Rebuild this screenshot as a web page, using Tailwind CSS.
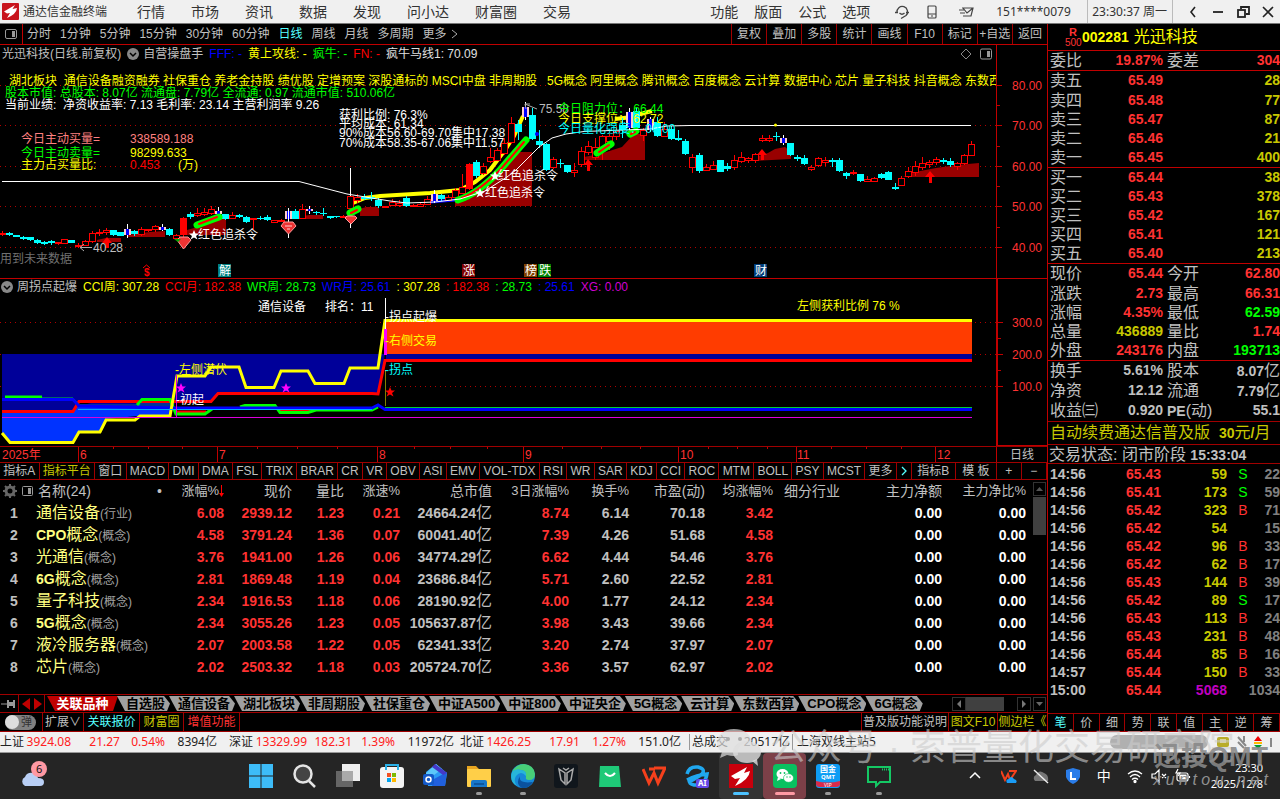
<!DOCTYPE html>
<html lang="zh-CN">
<head>
    <meta charset="UTF-8">
    <meta name="viewport" content="width=device-width, initial-scale=1.0">
    <title>通达信金融终端</title>
    <script src="https://cdn.jsdelivr.net/npm/@tailwindcss/browser@4"></script>
</head>
<body class="relative min-h-screen flex flex-col overflow-x-hidden bg-black text-xs text-[#c0c0c0] whitespace-nowrap [font-family:'Liberation_Sans','Noto_Sans_CJK_SC',sans-serif]">

    <!-- Title bar -->
    <header class="h-6 flex items-center bg-[#f0f0f0] text-[#333] border-b border-[#777] [font-family:'Noto_Sans','Noto_Sans_CJK_SC',sans-serif]">
        <svg class="w-[17px] h-[17px] ml-[2px] mr-1 shrink-0" viewBox="0 0 17 17"><rect width="17" height="17" rx="1" fill="#c8141c"/><path d="M2 8.500L13 2L10.500 6L15 5Q14.500 11 5 15L8 10L5 10.500Z" fill="#fff"/></svg>
        <span class="w-[114px] shrink-0">通达信金融终端</span>
        <nav class="flex text-sm gap-[26px]">
            <a href="#">行情</a><a href="#">市场</a><a href="#">资讯</a><a href="#">数据</a><a href="#">发现</a><a href="#">问小达</a><a href="#">财富圈</a><a href="#">交易</a>
        </nav>
        <nav class="flex text-sm gap-4 ml-auto">
            <a href="#">功能</a><a href="#">版面</a><a href="#">公式</a><a href="#">选项</a>
        </nav>
        <div class="flex items-center gap-4 ml-6 mr-[22px]">
            <svg class="w-4 h-4" viewBox="0 0 16 16" fill="none" stroke="#444" stroke-width="1.3"><path d="M3 8.500A5.300 5.300 0 1 1 12 11.500L7 14.500"/><path d="M1 8.500H4M12 8.500H15M5.500 9Q8 11.500 10.500 9"/></svg>
            <svg class="w-3 h-4" viewBox="0 0 12 16" fill="none" stroke="#444" stroke-width="1.2"><rect x="2" y="2" width="8" height="12" rx="1"/><path d="M2 10H10M5 12H7"/></svg>
            <svg class="w-4 h-4 ml-1" viewBox="0 0 16 16" fill="none" stroke="#444" stroke-width="1.2"><path d="M4 4H15L13 12H5M1 6H6M2 9H7M5 4L9 9L15 4"/></svg>
        </div>
        <span class="w-[83px]">151****0079</span>
        <span class="h-full flex items-center pl-1 pr-[5px] border-x border-[#bbb] ml-2">23:30:37 周一</span>
        <div class="flex items-center gap-[9px] pl-3 pr-1">
            <button aria-label="后退"><svg class="w-4 h-4" viewBox="0 0 16 16" fill="none" stroke="#222" stroke-width="1.6"><path d="M10 3L6 8L10 13"/></svg></button>
            <button aria-label="最小化"><svg class="w-4 h-4" viewBox="0 0 16 16" stroke="#222" stroke-width="1.8"><path d="M3 8H13"/></svg></button>
            <button aria-label="还原"><svg class="w-4 h-4" viewBox="0 0 16 16" fill="none" stroke="#222" stroke-width="1.8"><path d="M6 5V3H14V10H11"/><rect x="3" y="6" width="7" height="7"/></svg></button>
            <button aria-label="关闭"><svg class="w-4 h-4" viewBox="0 0 16 16" stroke="#222" stroke-width="1.6"><path d="M3 3L13 13M13 3L3 13"/></svg></button>
        </div>
    </header>

    <div class="flex-1 flex">
        <main class="flex-1 min-w-0 flex flex-col">
            <!-- Period toolbar -->
            <div class="h-[21px] flex items-center border-b border-[#c00000]">
                <button class="h-full w-[23px] flex items-center justify-center border-r border-[#c00000]" aria-label="布局"><svg class="w-3 h-3" viewBox="0 0 12 12"><rect x="0.500" y="1.500" width="11" height="9" rx="1.500" fill="none" stroke="#999"/><rect x="7" y="3" width="3" height="6" fill="#999"/></svg></button>
                <div class="flex gap-[9px] ml-1">
                    <button>分时</button><button>1分钟</button><button>5分钟</button><button>15分钟</button><button>30分钟</button><button>60分钟</button><button class="text-[#55ffff]">日线</button><button>周线</button><button>月线</button><button>多周期</button><button class="flex items-center gap-1">更多 <svg class="w-2 h-3" viewBox="0 0 8 12" fill="none" stroke="#aaa"><path d="M1 2L6 6L1 10"/></svg></button>
                </div>
                <div class="ml-auto h-full grid grid-cols-9 w-[316px] *:border-l *:border-[#a00000]">
                    <button>复权</button><button>叠加</button><button>多股</button><button>统计</button><button>画线</button><button>F10</button><button>标记</button><button>+自选</button><button>返回</button>
                </div>
            </div>

            <!-- Daily K line -->
            <section class="h-[234px] flex border-b border-[#c00000]">
                <div class="relative flex-1 min-w-0 overflow-hidden">
                    <svg class="w-full h-full" font-size="12">
                        <g transform="translate(0,-45)">
                            <path d="M0 85.500H3000M0 125.500H3000M0 166.500H3000M0 206.500H3000M0 247.500H3000" stroke="#b00000" stroke-dasharray="1 4"/>
                            <g fill="#990000">
                                <path d="M97 242V240L106 238H121V242ZM127 237V235L150 232L165 231V237ZM187 235V230L205 225L218 219H226V235ZM302 219V216L310 215H323V219ZM360 216V209L366 207H379V216Z"/>
                                <path d="M455 206V200L475 190L500 170L512 152H532V206ZM584 160V157L600 154L622 147L634 134H645V160ZM752 161V158L768 153L775 149L785 147L791 152V159ZM903 177L915 172L936 168L957 165L979 163V177Z"/>
                            </g>
                            <path d="M353 203L365 198L380 196L430 193L460 190L475 182L490 170L505 150L514 136L523 116" fill="none" stroke="#ff0" stroke-width="4"/>
                            <path d="M615 119L632 117L640 114L652 111" fill="none" stroke="#ff0" stroke-width="4"/>
                            <path d="M431 202L455 200" stroke="#00f" stroke-width="3"/>
                            <g id="candles" shape-rendering="crispEdges"></g>
                            <g fill="none" stroke-linecap="round">
                                <path d="M458 200Q478 194 500 170L526 140M197 225L219 217M350 213L358 209M597 153L611 144M630 134L636 131" stroke="#0f0" stroke-width="7"/>
                                <path d="M462 198Q478 192 500 170L524 142M199 224L217 217M351 213L357 210M599 152L609 145M631 134L635 132" stroke="#f00" stroke-width="2"/>
                            </g>
                            <path d="M2 181.500H299L347 194L390 201L407 203L435 202L460 199L485 191L507 177L516 170L539 147L552 138L566 134L584 131.500L650 129L667 126L690 125.500H971" fill="none" stroke="#fff"/>
                            <path d="M288.500 208V238M350.500 168V196M350.500 224V228" stroke="#fff"/>
                            <!-- diamonds and arrows -->
                            <g fill="#e33" stroke="#f99">
                                <path d="M177 240L180 237H188L191 240L183.500 249Z"/><path d="M281 226L284 222H293L296 226L288.500 234Z"/><path d="M345 218L347 216H355L357 218L351 224Z"/>
                            </g>
                            <path d="M285 226H292M287 229H290" stroke="#fcc"/>
                            <path d="M174 239H181L178 242Z" fill="#0a0"/>
                            <path d="M107 237L112 243H109V248H105V243H102ZM588 159L593 165H590V171H587V165H584ZM762 149L767 155H764V160H761V155H757ZM930 171L935 177H932V183H929V177H925Z" fill="#f00"/>
                            <path d="M194 230L195.500 233.500H199L196 236L197.500 239.500L194 237.500L190.500 239.500L192 236L189 233.500H192.500ZM480 188L481.500 191.500H485L482 194L483.500 197.500L480 195.500L476.500 197.500L478 194L475 191.500H478.500ZM495 171L496.500 174.500H500L497 177L498.500 180.500L495 178.500L491.500 180.500L493 177L490 174.500H493.500Z" fill="#fff"/>
                            <path d="M80 247.500H92M80 247.500L84 244M80 247.500L84 251M525 104L537 109M525 104H530M525 104L526 109" stroke="#aaa" fill="none"/>
                            <circle cx="775.500" cy="125" r="1.500" fill="#ff0"/><circle cx="537" cy="134" r="2" fill="#00f"/>

                            <text x="9" y="85" fill="#ff0">湖北板块&#160; 通信设备融资融券 社保重仓 养老金持股 绩优股 定增预案 深股通标的 MSCI中盘 非周期股&#160;&#160; 5G概念 阿里概念 腾讯概念 百度概念 云计算 数据中心 芯片 量子科技 抖音概念 东数西算</text>
                            <text x="5" y="97" fill="#0f0">股本市值: 总股本: 8.07亿 流通盘: 7.79亿 全流通: 0.97 流通市值: 510.06亿</text>
                            <text x="5" y="109" fill="#fff">当前业绩:&#160; 净资收益率: 7.13 毛利率: 23.14 主营利润率 9.26</text>
                            <g fill="#fff"><text x="339" y="119">获利比例: 76.3%</text><text x="339" y="128">平均成本: 61.34</text><text x="339" y="137">90%成本56.60-69.70集中17.38</text><text x="339" y="147">70%成本58.35-67.06集中11.57</text></g>
                            <g fill="#ff8080"><text x="21" y="143">今日主动买量=</text><text x="130" y="143">338589.188</text></g>
                            <text x="21" y="157" fill="#0f0">今日主动卖量=</text><text x="130" y="157" fill="#ff0">98299.633</text>
                            <text x="21" y="169" fill="#ff0">主力占买量比:</text><text x="130" y="169" fill="#f00">0.453</text><text x="178" y="169" fill="#ff0">(万)</text>
                            <text x="539" y="113" fill="#bbb">75.58</text><text x="558" y="113" fill="#0f0">今日阻力位：&#160;66.44</text><text x="558" y="123" fill="#ff0">今日支撑位：&#160;62.72</text><text x="558" y="133" fill="#0ff">今日量化强度：&#160;00.00</text>
                            <g fill="#fff"><text x="198" y="239">红色追杀令</text><text x="498" y="180">红色追杀令</text><text x="485" y="197">红色追杀令</text></g>
                            <text x="93" y="252" fill="#c0c0c0">40.28</text>
                            <text x="0" y="263" fill="#707070">用到未来数据</text>
                            <text x="144" y="276" fill="#f00" font-size="10" font-weight="bold">$</text><path d="M143 268L146.500 265L150 268" stroke="#f00" fill="none"/>
                            <rect x="218" y="264" width="13" height="13" fill="#008080"/><rect x="462" y="264" width="13" height="13" fill="#800000"/><rect x="524" y="264" width="13" height="13" fill="#804000"/><rect x="538" y="264" width="13" height="13" fill="#008000"/><rect x="754" y="264" width="13" height="13" fill="#003c78"/>
                            <g fill="#fff"><text x="219" y="275">解</text><text x="463" y="275">涨</text><text x="525" y="275">榜</text><text x="539" y="275">跌</text><text x="755" y="275">财</text></g>
                        </g>
                    </svg>
                    <div class="absolute inset-x-0 top-0 h-[18px] flex items-center pl-[2px] pr-1">
                        <span>光迅科技(日线.前复权)</span>
                        <svg class="w-3 h-3 ml-[6px] mr-1" viewBox="0 0 12 12"><circle cx="6" cy="6" r="6" fill="#888"/><path d="M3 5L6 8L9 5" fill="none" stroke="#000" stroke-width="1.500"/></svg>
                        <span>自营操盘手</span>
                        <span class="ml-[6px] text-[#0000ff]">FFF: -</span><span class="ml-[6px] text-[#ffff00]">黄上攻线: -</span><span class="ml-[6px] text-[#00ff00]">疯牛: -</span><span class="ml-[6px] text-[#ff0000]">FN: -</span><span class="ml-[6px] text-[#e0e0e0]">疯牛马线1: 70.09</span>
                        <svg class="w-3 h-3 ml-auto mr-2" viewBox="0 0 12 12" fill="none" stroke="#888"><path d="M6 1L11 6L6 11L1 6Z"/></svg>
                        <svg class="w-3 h-3" viewBox="0 0 12 12"><rect x="0.500" y="1" width="11" height="10" rx="1.500" fill="none" stroke="#999"/><rect x="7" y="3" width="3" height="6" fill="#999"/></svg>
                    </div>
                </div>
                <svg class="w-[51px] h-full border-l border-[#c00000]" font-size="12" fill="#ff3232">
                    <path d="M0 40.500H5M0 80.500H5M0 121.500H5M0 161.500H5M0 202.500H5M0 60.500H3M0 101.500H3M0 141.500H3M0 182.500H3" stroke="#c00000"/>
                    <g text-anchor="end"><text x="45" y="45">80.00</text><text x="45" y="85">70.00</text><text x="45" y="126">60.00</text><text x="45" y="166">50.00</text><text x="45" y="207">40.00</text></g>
                </svg>
            </section>

            <!-- Weekly turning point indicator -->
            <section class="h-[167px] flex">
                <div class="relative flex-1 min-w-0 overflow-hidden">
                    <svg class="w-full h-full" font-size="12">
                        <g transform="translate(0,-279)">
                            <path d="M0 322.500H3000M0 354.500H3000M0 386.500H3000" stroke="#b00000" stroke-dasharray="1 4"/>
                            <path d="M2 354H385L378 394H218L211 401H176L170 416H140L79 401L73 411H2Z" fill="#000099"/>
                            <path d="M2 412H73L80 404H172L170 416H138L106 419L100 432H79L72 443H10L2 434Z" fill="#0033ff"/>
                            <path d="M80 404H137V407H80ZM142 401H172V407H139Z" fill="#003399"/>
                            <rect x="386" y="322" width="586" height="32" fill="#ff3c00"/><rect x="386" y="354" width="586" height="6" fill="#000099"/>
                            <g fill="none" stroke-width="3">
                                <path d="M2 411.500H73L79 401.500H211L218 393.500H372L378 394L385 360.500H972M176 412H206M280 411H310" stroke="#f00"/>
                                <path d="M5 397H42M137 405L142 399.500H170L176 414H205L212 409M240 407L245 405.500H275L280 412.500H308L316 410H372L378 407" stroke="#0f0"/>
                                <path d="M42 398H73L80 406H103M385 407.500H972" stroke="#0c3" stroke-width="1"/>
                                <path d="M2 399.500H73L79 406L170 408H372L378 405L385 409.500H972" stroke="#00f"/>
                                <path d="M2 433L10 442.500H73L79 432H100L106 420H135L140 416H170L177 376H205L211 367H239L246 387.500H274L281 371H308L315 383.500H344L350 368H378L385 320.500H972" stroke="#ff0"/>
                            </g>
                            <path d="M78 409.500H372" stroke="#0af"/>
                            <path d="M2 417.500H972M176.500 375V417" stroke="#d0d"/>
                            <path d="M385.500 298V330" stroke="#fff"/><path d="M385.500 329V355" stroke="#f0f" stroke-width="3"/><path d="M385.500 370V406" stroke="#808000"/>
                            <path d="M181 383L182.500 386.500H186L183 389L184.500 392.500L181 390.500L177.500 392.500L179 389L176 386.500H179.500ZM286 383L287.500 386.500H291L288 389L289.500 392.500L286 390.500L282.500 392.500L284 389L281 386.500H284.500Z" fill="#f0f"/>
                            <path d="M390 387L391.500 390.500H395L392 393L393.500 396.500L390 394.500L386.500 396.500L388 393L385 390.500H388.500Z" fill="#f00"/>
                            <g fill="#fff"><text x="258" y="311">通信设备</text><text x="325" y="311">排名：11</text><text x="385" y="321">-拐点起爆</text><text x="176" y="404">-初起</text></g>
                            <g fill="#ff0"><text x="385" y="345">-右侧交易</text><text x="175" y="374">-左侧潜伏</text><text x="797" y="310">左侧获利比例 76 %</text></g>
                            <text x="385" y="374" fill="#0ff">-拐点</text>
                        </g>
                    </svg>
                    <div class="absolute inset-x-0 top-0 h-4 flex items-center gap-[6px]">
                        <svg class="w-3 h-3 ml-px" viewBox="0 0 12 12"><circle cx="6" cy="6" r="6" fill="#888"/><path d="M3 5L6 8L9 5" fill="none" stroke="#000" stroke-width="1.500"/></svg>
                        <span class="-ml-[2px]">周拐点起爆</span><span class="text-[#ffff00]">CCI周: 307.28</span><span class="text-[#ff0000]">CCI月: 182.38</span><span class="text-[#00ff00]">WR周: 28.73</span><span class="text-[#0000ff]">WR月: 25.61</span><span class="text-[#ffff00]">: 307.28</span><span class="text-[#ff0000]">: 182.38</span><span class="text-[#00ff00]">: 28.73</span><span class="text-[#0000ff]">: 25.61</span><span class="text-[#d000d0]">XG: 0.00</span>
                    </div>
                </div>
                <svg class="w-[51px] h-full border-l-2 border-b border-[#c00000]" font-size="12" fill="#ff3232">
                    <path d="M0 43.500H5M0 75.500H5M0 107.500H5M0 59.500H3M0 91.500H3" stroke="#c00000"/>
                    <g text-anchor="end"><text x="44" y="48">300.0</text><text x="44" y="80">200.0</text><text x="44" y="112">100.0</text></g>
                </svg>
            </section>

            <div class="h-4 flex border-t border-[#a00000]">
                <svg class="flex-1 min-w-0 h-full" font-size="12" fill="#ff3232">
                    <path d="M78.500 0V16M217.500 0V16M377.500 0V16M523.500 0V16M678.500 0V16M796.500 0V16M935.500 0V16M113.500 0V2M148.500 0V2M182.500 0V2M257.500 0V2M297.500 0V2M337.500 0V2M414.500 0V2M450.500 0V2M487.500 0V2M562.500 0V2M601.500 0V2M640.500 0V2M708.500 0V2M737.500 0V2M767.500 0V2M831.500 0V2M866.500 0V2M901.500 0V2" stroke="#c00000"/>
                    <text x="2" y="12">2025年</text><text x="80" y="12">6</text><text x="219" y="12">7</text><text x="379" y="12">8</text><text x="525" y="12">9</text><text x="680" y="12">10</text><text x="797" y="12">11</text><text x="937" y="12">12</text>
                </svg>
                <button class="w-[51px] border-l border-[#c00000] leading-none">日线</button>
            </div>

            <div class="h-[18px] flex border-y border-[#a00000] *:border-r *:border-[#a00000]">
                <button class="flex-auto">指标A</button><button class="flex-auto text-[#c8c800]">指标平台</button><button class="flex-auto">窗口</button><button class="flex-auto">MACD</button><button class="flex-auto">DMI</button><button class="flex-auto">DMA</button><button class="flex-auto">FSL</button><button class="flex-auto">TRIX</button><button class="flex-auto">BRAR</button><button class="flex-auto">CR</button><button class="flex-auto">VR</button><button class="flex-auto">OBV</button><button class="flex-auto">ASI</button><button class="flex-auto">EMV</button><button class="flex-auto">VOL-TDX</button><button class="flex-auto">RSI</button><button class="flex-auto">WR</button><button class="flex-auto">SAR</button><button class="flex-auto">KDJ</button><button class="flex-auto">CCI</button><button class="flex-auto">ROC</button><button class="flex-auto">MTM</button><button class="flex-auto">BOLL</button><button class="flex-auto">PSY</button><button class="flex-auto">MCST</button><button class="flex-auto">更多</button>
                <button class="w-[15px] flex items-center justify-center" aria-label="下一页"><svg class="w-2 h-3" viewBox="0 0 8 12" fill="none" stroke="#5ff" stroke-width="1.300"><path d="M2 2L6 6L2 10"/></svg></button>
                <button class="w-[44px]">指标B</button><button class="w-[41px]">模 板</button><button class="w-[25px]">+</button><button class="w-[25px]">−</button>
            </div>

            <!-- Related sectors -->
            <div class="flex-1 flex">
                <div class="flex-1 min-w-0">
                    <table class="w-full table-fixed text-sm">
                        <colgroup><col class="w-[28px]"><col class="w-[140px]"><col class="w-[56px]"><col class="w-[68px]"><col class="w-[52px]"><col class="w-[56px]"><col class="w-[92px]"><col class="w-[77px]"><col class="w-[60px]"><col class="w-[76px]"><col class="w-[68px]"><col class="w-[85px]"><col class="w-[84px]"><col class="w-[84px]"></colgroup>
                        <thead>
                            <tr class="h-[22px] *:p-0 *:font-normal text-right">
                                <th><svg class="w-[30px] h-[14px] ml-[3px]" viewBox="0 0 30 14"><circle cx="7" cy="7" r="4" fill="none" stroke="#666" stroke-width="3"/><path d="M7 0V3M7 11V14M0 7H3M11 7H14M2 2L4 4M10 10L12 12M12 2L10 4M4 10L2 12" stroke="#666" stroke-width="2"/><rect x="19.500" y="2.500" width="10" height="9" rx="1" fill="none" stroke="#999"/><rect x="25" y="4" width="3" height="6" fill="#999"/></svg></th>
                                <th><div class="flex justify-between pl-[10px] pr-[6px]"><span>名称(24)</span><span>•</span></div></th>
                                <th><div class="flex items-center justify-end text-[13px]">涨幅%<svg class="w-[5px] h-4" viewBox="0 0 5 16"><path d="M2.500 2V11" stroke="#f00"/><path d="M0 10H5L2.500 14Z" fill="#f00"/></svg></div></th>
                                <th>现价</th><th>量比</th><th class="text-[13px]">涨速%</th><th>总市值</th><th class="text-[13px]">3日涨幅%</th><th class="text-[13px]">换手%</th><th>市盈(动)</th><th class="text-[13px]">均涨幅%</th><th><div class="text-left pl-[11px]">细分行业</div></th><th>主力净额</th><th class="text-[13px]">主力净比%</th>
                            </tr>
                        </thead>
                        <tbody id="sectors"></tbody>
                    </table>
                </div>
                <div class="w-[21px] pl-[7px] pt-[2px]">
                    <button class="w-[13px] h-[14px] border border-[#333] flex items-center justify-center" aria-label="向上"><svg class="w-[7px] h-1" viewBox="0 0 7 4"><path d="M0 4L3.500 0L7 4Z" fill="#555"/></svg></button>
                    <div class="w-[13px] h-[38px] mt-px bg-[#404040]"></div>
                </div>
            </div>

            <!-- Sheet tabs -->
            <div class="h-[19px] flex items-center border-y border-[#a00000]">
                <button class="w-[19px] h-full flex items-center justify-center border-r border-[#a00000]" aria-label="固定"><svg class="w-4 h-3" viewBox="0 0 16 12" fill="#999"><path d="M0 5.500H6V2H8V4H12V2H14V10H12V8H8V10H6V6.500H0Z"/></svg></button>
                <button class="w-[13px] flex justify-center" aria-label="左移"><svg class="w-2 h-3" viewBox="0 0 8 12"><path d="M8 0V12L0 6Z" fill="#c00000"/></svg></button>
                <button class="w-[13px] h-full flex items-center justify-center border-r border-[#a00000]" aria-label="右移"><svg class="w-2 h-3" viewBox="0 0 8 12"><path d="M0 0V12L8 6Z" fill="#c00000"/></svg></button>
                <div id="sheets" class="h-[15px] flex text-[13px] leading-[15px] font-bold ml-[2px]"></div>
                <button class="ml-auto w-[14px] h-[14px] border border-[#333] flex items-center justify-center" aria-label="向左滚动"><svg class="w-1 h-2" viewBox="0 0 4 8"><path d="M4 0V8L0 4Z" fill="#777"/></svg></button>
                <div class="w-[38px] h-[14px] bg-[#404040] mr-[13px]"></div>
                <button class="w-[14px] h-[14px] border border-[#333] flex items-center justify-center" aria-label="向右滚动"><svg class="w-1 h-2" viewBox="0 0 4 8"><path d="M0 0V8L4 4Z" fill="#777"/></svg></button>
                <button class="w-[13px] h-[14px] border border-[#333] flex items-center justify-center ml-[2px] mr-px" aria-label="向下"><svg class="w-[7px] h-1" viewBox="0 0 7 4"><path d="M0 0L3.500 4L7 0Z" fill="#666"/></svg></button>
            </div>

            <div class="h-[19px] flex items-stretch border-b border-[#a00000] *:border-[#a00000]">
                <button class="w-[43px] border-r flex items-center pl-[5px]"><span class="w-[31px] h-[15px] rounded-full bg-[#808080] flex items-center justify-between text-[11px] leading-none text-[#333] pr-1"><span class="w-[14px] h-[14px] rounded-full bg-[#ddd]"></span>弹</span></button>
                <button class="w-[41px] border-r">扩展∨</button><button class="w-[56px] border-r text-[#55ffff]">关联报价</button><button class="w-[44px] border-r text-[#c8c800]">财富圈</button><button class="w-[56px] border-r text-[#ff3232]">增值功能</button>
                <button class="ml-auto w-[87px] border-l">普及版功能说明</button><button class="w-[49px] border-l text-[#c8c800]">图文F10</button><button class="w-[50px] border-l text-[#c8c800]">侧边栏《</button>
            </div>
        </main>

        <!-- Quote panel -->
        <aside class="w-[233px] shrink-0 overflow-hidden flex flex-col border-l border-[#c00000] text-base">
            <h1 class="h-[27px] flex items-center border-b border-[#c00000] pl-[17px] text-[#ffff00]">
                <span class="w-4 text-center text-[#ff3232] text-[11px] leading-[10px] mr-[1px]"><b>R</b><br><span class="text-[10px]">500</span></span><b class="text-sm mr-[5px]">002281</b>光迅科技
            </h1>
            <table class="w-full table-fixed leading-[19px]"><colgroup><col class="w-[52px]"><col class="w-[63px]"><col class="w-[40px]"><col></colgroup><tbody id="quote"></tbody></table>
            <a href="#" class="h-[23px] leading-[22px] block pl-[2px] border-t border-[#a00000] text-[#c8c800]">自动续费通达信普及版&#160; <b class="text-sm">30</b>元<b class="text-sm">/</b>月</a>
            <div class="h-5 leading-[18px] pl-px border-y border-[#a00000]">交易状态: 闭市阶段 <b class="text-sm">15:33:04</b></div>
            <table class="w-full table-fixed text-sm font-bold mt-px"><colgroup><col class="w-[45px]"><col class="w-[68px]"><col class="w-[66px]"><col class="w-[32px]"><col></colgroup><tbody id="ticks"></tbody></table>
            <div class="mt-auto h-[19px] grid grid-cols-9 border-y border-[#a00000] text-xs *:border-r *:border-[#a00000]">
                <button class="text-[#55ffff]">笔</button><button>价</button><button>细</button><button>势</button><button>联</button><button>值</button><button>主</button><button>逆</button><button>筹</button>
            </div>
        </aside>
    </div>

    <!-- Index strip -->
    <div class="h-[21px] flex items-center bg-[#f0f0f0] border-b border-[#999] text-[#222] text-right [font-family:'Noto_Sans','Noto_Sans_CJK_SC',sans-serif]">
        <span class="w-6">上证</span><span class="w-[47px] text-[#ff2020]">3924.08</span><span class="w-[49px] text-[#ff2020]">21.27</span><span class="w-[45px] text-[#ff2020]">0.54%</span><span class="w-[52px]">8394亿</span>
        <span class="w-9">深证</span><span class="w-[54px] text-[#ff2020]">13329.99</span><span class="w-[45px] text-[#ff2020]">182.31</span><span class="w-[43px] text-[#ff2020]">1.39%</span><span class="w-[59px]">11972亿</span>
        <span class="w-[30px]">北证</span><span class="w-[47px] text-[#ff2020]">1426.25</span><span class="w-[49px] text-[#ff2020]">17.91</span><span class="w-[46px] text-[#ff2020]">1.27%</span><span class="w-[55px]">151.0亿</span>
        <span class="ml-2 pl-[2px] border-l border-[#999] w-[39px] text-left">总成交</span><span class="w-[65px] pr-[2px] border-r border-[#999]">20517亿</span><span class="ml-1">上海双线主站5</span>
        <span class="ml-auto w-[98px] h-[14px] rounded-full bg-[#b0b0b0]"></span>
        <svg class="w-[60px] h-4 ml-2 mr-1" viewBox="0 0 60 16"><rect x="1" y="3" width="12" height="10" rx="2" fill="#b8ac28"/><path d="M4 6H10M4 8H10" stroke="#fff"/><path d="M22 3L30 12M22 8L28 14M28 2V8" stroke="#888" stroke-width="2"/><path d="M38 7L42 2L46 7Z" fill="#e00"/><path d="M38 8H46V10H38Z" fill="#fb0"/><path d="M38 11H46L42 15Z" fill="#093"/><path d="M55 4V13" stroke="#888" stroke-width="2"/></svg>
    </div>

    <!-- Windows taskbar -->
    <footer class="h-[46px] flex items-center bg-[#252525] text-white [font-family:'Noto_Sans','Noto_Sans_CJK_SC',sans-serif]">
        <div class="w-[239px] pl-[18px]">
            <button class="block" aria-label="天气"><svg class="w-8 h-8" viewBox="0 0 32 32"><path d="M7 26A5 5 0 0 1 7 17Q9 12 15 13Q19 14 20 18Q26 18 26 22Q26 26 22 26Z" fill="#b9cff5"/><circle cx="21" cy="9" r="8" fill="#ff99a4"/><text x="18" y="13" font-size="11" fill="#111">6</text></svg></button>
        </div>
        <div class="grid grid-cols-14 w-[611px] h-full *:flex *:items-center *:justify-center">
            <button aria-label="开始"><svg class="w-6 h-6" viewBox="0 0 24 24" fill="#3dbcf8"><path d="M0 0H11.500V11.500H0ZM12.500 0H24V11.500H12.500ZM0 12.500H11.500V24H0ZM12.500 12.500H24V24H12.500Z"/></svg></button>
            <button aria-label="搜索"><svg class="w-6 h-6" viewBox="0 0 24 24" fill="none" stroke="#e4e4e4" stroke-width="2.500"><circle cx="11" cy="10" r="8.500" fill="#444"/><path d="M17 17L23 23"/></svg></button>
            <button aria-label="任务视图"><svg class="w-6 h-6" viewBox="0 0 24 24"><rect x="0" y="7" width="17" height="16" fill="#666"/><rect x="6" y="0" width="18" height="17" fill="#eee"/><rect x="6" y="7" width="11" height="10" fill="#aaa"/></svg></button>
            <button aria-label="商店"><svg class="w-6 h-6" viewBox="0 0 24 24"><rect y="3" width="24" height="21" rx="3" fill="#f4f4f4"/><path d="M6 6V1H18V6" fill="none" stroke="#2ab0e8" stroke-width="2"/><path d="M7 9H11V13H7Z" fill="#f25022"/><path d="M12 9H16V13H12Z" fill="#7fba00"/><path d="M7 14H11V18H7Z" fill="#00a4ef"/><path d="M12 14H16V18H12Z" fill="#ffb900"/></svg></button>
            <button aria-label="邮件"><svg class="w-6 h-6" viewBox="0 0 24 24"><path d="M3 8L13 0L24 9L22 22H5Z" fill="#2c9cf5"/><path d="M3 9L13 0L19 5L3 17Z" fill="#5cc8fa"/><path d="M11 15L24 8L22 22H9Z" fill="#2160dd"/><path d="M12 0L24 9L20 11L9 3Z" fill="#4538c8"/><rect y="10" width="11" height="11" rx="2" fill="#1459c8"/><circle cx="5.500" cy="15.500" r="2.500" fill="none" stroke="#fff" stroke-width="1.500"/></svg></button>
            <button class="relative" aria-label="文件资源管理器"><svg class="w-6 h-6" viewBox="0 0 24 24"><path d="M0 2H9L12 5H24V12H0Z" fill="#e8a520"/><rect y="5" width="24" height="18" rx="1" fill="#ffcf48"/><path d="M4 23V18Q4 16 6 16H18Q20 16 20 18V23Z" fill="#1877c9"/><path d="M7 20H17" stroke="#0d57a0" stroke-width="2"/></svg><i class="absolute bottom-1 w-[6px] h-[3px] rounded bg-[#999]"></i></button>
            <button class="relative" aria-label="Edge"><svg class="w-6 h-6" viewBox="0 0 24 24"><circle cx="12" cy="12" r="12" fill="#1688d8"/><path d="M1 8Q5 0 13 0Q23 1 24 10Q24 16 18 16Q14 16 15 13Q16 7 10 6Q5 5 1 8Z" fill="#48cf78"/><path d="M1 8Q5 4 10 6Q16 7 15 12Q10 6 5 12Q2 17 6 22Q-2 18 1 8Z" fill="#27b5d9"/><path d="M9 12Q7 20 22 18Q17 25 11 24Q4 20 9 12Z" fill="#0b529f"/></svg><i class="absolute bottom-1 w-[6px] h-[3px] rounded bg-[#999]"></i></button>
            <button aria-label="守望者"><svg class="w-6 h-6" viewBox="0 0 24 24"><rect width="24" height="24" rx="3" fill="#10161c"/><path d="M5 5L11 9V20L7 16ZM19 5L13 9V20L17 16ZM9 4L12 6L15 4" fill="none" stroke="#aaa" stroke-width="1.500"/></svg></button>
            <button aria-label="应用商店"><svg class="w-[22px] h-[22px]" viewBox="0 0 22 22"><path d="M1 1H20L22 22H0Z" fill="#1fc978"/><path d="M6 8Q11 14 16 8" fill="none" stroke="#fff" stroke-width="2"/></svg></button>
            <button aria-label="WPS"><svg class="w-6 h-6" viewBox="0 0 24 24" fill="none" stroke="#f5401c" stroke-width="3"><path d="M1 5L7 19L12 9L16 19L23 4H12M7 5H13"/></svg></button>
            <button aria-label="AI浏览器"><svg class="w-6 h-6" viewBox="0 0 24 24"><path d="M2 10Q4 2 13 3Q21 5 17 10Q13 13 4 18M2 16Q12 11 22 10Q20 22 9 21Q4 20 4 16" fill="none" stroke="#20a8f0" stroke-width="3.500"/><rect x="11" y="15" width="13" height="9" rx="2" fill="#6548e8"/><text x="13" y="22" font-size="8" font-weight="bold" fill="#fff">AI</text></svg></button>
            <button class="relative bg-[#343434] rounded" aria-label="通达信"><svg class="w-6 h-6" viewBox="0 0 24 24"><rect width="24" height="24" fill="#c8000c"/><path d="M2 12L18 3L15 9L21 7Q20 16 6 22L11 14L6 15Z" fill="#fff"/></svg><i class="absolute bottom-1 w-4 h-[3px] rounded bg-[#4cc2ff]"></i></button>
            <button class="relative bg-[#7c4048] rounded" aria-label="微信"><svg class="w-6 h-6" viewBox="0 0 24 24"><rect width="24" height="24" rx="4" fill="#09c160"/><ellipse cx="9.500" cy="10" rx="6" ry="5" fill="#fff"/><path d="M5 13L4 17L8 15Z" fill="#fff"/><ellipse cx="15.500" cy="14" rx="5" ry="4.300" fill="#fff" stroke="#09c160" stroke-width="0.600"/><g fill="#09c160"><circle cx="7.500" cy="9" r="0.900"/><circle cx="11.500" cy="9" r="0.900"/><circle cx="14" cy="13" r="0.700"/><circle cx="17" cy="13" r="0.700"/></g></svg><i class="absolute bottom-1 w-5 h-[3px] rounded bg-[#ff99a4]"></i></button>
            <button class="relative" aria-label="国金QMT"><svg class="w-6 h-6" viewBox="0 0 24 24"><rect width="24" height="24" rx="3" fill="#0e9df4"/><text x="4" y="8" font-size="8" font-weight="bold" fill="#fff">国金</text><text x="5" y="15" font-size="6" font-weight="bold" fill="#fff">QMT</text><path d="M0 17Q12 20 24 17V20Q24 23 20 23H4Q0 23 0 20Z" fill="#d92b4b"/><text x="8" y="23" font-size="5" fill="#fff">VIP</text></svg><i class="absolute bottom-1 w-[6px] h-[3px] rounded bg-[#999]"></i></button>
        </div>
        <button class="relative h-full w-[58px] flex items-center justify-center" aria-label="屏幕"><svg class="w-6 h-6" viewBox="0 0 24 24" fill="none" stroke="#14c864" stroke-width="2"><path d="M1 3H23V18H13L9 22V18H1Z"/><path d="M15 5.500H22" stroke-dasharray="1 1"/></svg><i class="absolute bottom-1 w-[6px] h-[3px] rounded bg-[#999]"></i></button>
        <div class="ml-auto flex items-center pr-[17px]">
            <svg class="w-3 h-3 mr-5" viewBox="0 0 12 12" fill="none" stroke="#fff" stroke-width="1.500"><path d="M1 8L6 3L11 8"/></svg>
            <svg class="w-4 h-4 mr-4" viewBox="0 0 16 16"><path d="M0 3L4 12L7 6L9 12L15 3H8" fill="none" stroke="#f5401c" stroke-width="2"/><path d="M6 15Q4 11 8 11Q10 7 13 11Q17 12 15 15Z" fill="#1a9cf5"/></svg>
            <svg class="w-4 h-4 mr-4" viewBox="0 0 16 16"><path d="M2 13Q-1 9 3 7Q6 1 11 5Q16 7 15 13Z" fill="#777"/><path d="M1 2L15 15" stroke="#eee" stroke-width="1.500"/></svg>
            <svg class="w-4 h-4 mr-4" viewBox="0 0 16 16"><path d="M8 0L15 2V9Q13 14 8 16Q3 14 1 9V2Z" fill="#2b7de9"/><path d="M6 4V11H11" fill="none" stroke="#fff" stroke-width="2"/></svg>
            <span class="text-sm mr-4">中</span>
            <svg class="w-4 h-4 mr-2" viewBox="0 0 16 16" fill="none" stroke="#fff" stroke-width="1.300"><path d="M1 6Q8 0 15 6M3 9Q8 4 13 9M5 11.500Q8 9 11 11.500"/><circle cx="8" cy="13.500" r="1" fill="#fff"/></svg>
            <svg class="w-4 h-4 mr-2" viewBox="0 0 16 16" fill="none" stroke="#fff" stroke-width="1.200"><path d="M1 6H4L8 2V14L4 10H1ZM11 6L15 10M15 6L11 10"/></svg>
            <svg class="w-4 h-4 mr-5" viewBox="0 0 16 16" fill="none" stroke="#fff" stroke-width="1.200"><rect x="2" y="5" width="11" height="8" rx="2"/><path d="M5 7H11V11H5Z" fill="#fff"/><path d="M14.500 8V10M3 1L1 5H5L3 8"/></svg>
            <div class="text-[11px] leading-4 text-right">23:30<br>2025/12/8</div>
        </div>
    </footer>

    <!-- Channel watermarks -->
    <div class="absolute right-[46px] bottom-[27px] h-12 flex items-center pointer-events-none text-[36px] leading-none">
        <svg class="w-[46px] h-10 mr-2" viewBox="0 0 46 40"><path d="M18 1C8 1 1 7 1 15Q1 20 6 24L4 30L11 27Q18 29 22 27Q20 15 36 13Q32 1 18 1Z" fill="#ddd" fill-opacity="0.700"/><ellipse cx="31" cy="24" rx="14" ry="11" fill="#ddd" fill-opacity="0.800"/><path d="M36 33L42 38L41 31Z" fill="#ddd" fill-opacity="0.800"/><g fill="#aaa"><circle cx="12" cy="11" r="2"/><circle cx="24" cy="11" r="2"/></g></svg>
        <span class="text-[#cccccc]/60">公众号 · 索普量化交易研究院</span>
    </div>
    <div class="absolute right-[12px] bottom-[10px] text-right pointer-events-none">
        <div class="text-[27px] leading-[28px] font-bold text-[#888888]/90">迅投QMT</div>
        <div class="text-[16px] leading-[18px] italic text-[#909090]">x u n t o u . n e t</div>
    </div>

    <script>
        // type, high, body top, body bottom, low (u = up, d = down, b = blue, s = solid red)
        const candles = `u231,233,234,236 d232,233,235,236 d235,235,237,237 d236,237,239,240 d237,237,240,241 d239,240,243,244 d241,242,244,245 d240,241,243,245 u242,242,243,245 u239,239,243,243
d240,240,243,243 u243,245,246,248 u240,241,245,246 u231,233,241,243 u229,232,233,236 u228,230,232,235 d230,230,235,236 d232,232,236,236 b224,229,235,238 d230,231,234,236
u227,229,234,236 u229,229,230,232 u225,226,229,232 b224,227,230,231 d228,229,235,236 u234,235,238,239 s217,218,235,237 d212,214,217,219 u208,213,215,217 u208,212,214,216
u206,209,213,215 b207,211,214,214 d214,214,219,220 u212,215,218,219 d214,215,217,218 d216,217,222,223 u218,218,219,230 d216,218,219,220 d215,217,220,221 u220,220,222,222
u219,220,221,222 b208,211,219,238 d209,211,219,219 u204,209,218,219 b206,209,211,214 d211,212,213,215 d208,213,214,216 d216,216,218,219 d216,216,217,218 u215,216,217,218
u196,196,208,208 u194,197,200,203 d194,197,199,200 d192,197,199,201 d198,200,206,208 u206,206,207,208 u199,202,205,206 u200,203,205,207 d196,198,206,207 u204,205,206,207
u203,204,206,206 u196,199,204,205 b190,194,201,203 d194,195,199,201 u195,197,200,201 u188,190,197,199 u174,187,193,194 s163,164,189,190 d160,162,176,178 u163,166,173,175
u148,157,161,163 u148,150,160,161 u138,143,153,155 u117,123,142,144 d120,124,132,140 b102,107,117,120 d108,115,139,140 d130,141,145,148 d143,144,170,171 u157,159,167,169
d159,163,164,168 d165,165,172,173 u163,170,172,177 u147,151,164,167 u141,146,152,155 u138,147,157,160 u135,136,148,160 u133,136,141,150 u126,131,136,140 d118,125,130,138
b108,112,128,130 d107,111,128,131 u128,130,135,141 b117,119,130,132 d117,122,136,137 u122,129,136,137 d126,129,139,140 d130,138,140,141 d139,141,154,155 u154,157,167,173
d153,155,171,173 u164,167,170,171 u161,165,169,170 d160,160,172,172 d163,166,169,171 u155,160,167,170 u152,157,161,163 u157,158,160,163 u153,154,160,163 u135,138,140,142
u135,138,140,142 d132,136,137,141 b135,138,143,145 d143,143,155,156 d155,157,159,161 d155,158,164,165 u165,167,169,171 u157,158,165,167 u157,160,162,166 d158,160,162,167
d158,160,171,172 d172,173,176,179 u170,172,173,175 d174,174,181,182 u176,179,181,182 u177,178,181,182 d173,174,178,179 d171,172,180,180 d183,187,189,190 u176,178,185,186
u167,171,176,178 u161,166,172,176 u157,163,167,170 u160,162,164,168 u157,159,162,165 d158,160,162,164 d158,161,165,167 u162,163,166,170 u154,155,163,165 u141,144,155,156`.split(/\s+/);

        document.getElementById("candles").innerHTML = candles.map((c, i) => {
            const x = Math.round(1.7 + 6.975 * i);
            const [hi, top, bot, lo] = c.slice(1).split(",").map(Number);
            const color = { u: "#f00", s: "#f00", d: "#0ff", b: "#fff" }[c[0]];
            const h = Math.max(bot - top, 1);
            let s = `<path d="M${x + 0.5} ${hi}V${top}M${x + 0.5} ${bot}V${lo}" stroke="${color}"/>`;
            if (c[0] === "u") s += `<rect x="${x - 2.5}" y="${top + 0.5}" width="6" height="${h}" fill="#000" stroke="#f00"/>`;
            else if (c[0] === "b") s += `<rect x="${x - 3}" y="${top}" width="7" height="${h}" fill="#fcc"/><rect x="${x - 1}" y="${top}" width="3" height="${h}" fill="#00f"/>`;
            else s += `<rect x="${x - 3}" y="${top}" width="7" height="${h}" fill="${color}"/>`;
            return s;
        }).join("");

        const sectors = [
            ["通信设备", "行业", "6.08", "2939.12", "1.23", "0.21", "24664.24", "8.74", "6.14", "70.18", "3.42"],
            ["CPO概念", "概念", "4.58", "3791.24", "1.36", "0.07", "60041.40", "7.39", "4.26", "51.68", "4.58"],
            ["光通信", "概念", "3.76", "1941.00", "1.26", "0.06", "34774.29", "6.62", "4.44", "54.46", "3.76"],
            ["6G概念", "概念", "2.81", "1869.48", "1.19", "0.04", "23686.84", "5.71", "2.60", "22.52", "2.81"],
            ["量子科技", "概念", "2.34", "1916.53", "1.18", "0.06", "28190.92", "4.00", "1.77", "24.12", "2.34"],
            ["5G概念", "概念", "2.34", "3055.26", "1.23", "0.05", "105637.87", "3.98", "3.43", "39.66", "2.34"],
            ["液冷服务器", "概念", "2.07", "2003.58", "1.22", "0.05", "62341.33", "3.20", "2.74", "37.97", "2.07"],
            ["芯片", "概念", "2.02", "2503.32", "1.18", "0.03", "205724.70", "3.36", "3.57", "62.97", "2.02"],
        ];
        const red = v => `<td class="text-[#ff3232]">${v}</td>`;
        document.getElementById("sectors").innerHTML = sectors.map((r, i) => `
            <tr class="h-[22px] *:p-0 text-right font-bold">
                <td><div class="text-center">${i + 1}</div></td>
                <td><div class="text-left pl-2 text-base leading-5 font-normal text-[#ffff80]">${r[0].replace(/^[A-Z0-9]+/, m => `<b class="text-sm">${m}</b>`)}<span class="text-xs text-[#a0a0a0]">(${r[1]})</span></div></td>
                ${red(r[2])}${red(r[3])}${red(r[4])}${red(r[5])}
                <td>${r[6]}<span class="text-base leading-5 font-normal">亿</span></td>
                ${red(r[7])}<td>${r[8]}</td><td>${r[9]}</td>${red(r[10])}<td></td>
                <td class="text-white">0.00</td><td class="text-white">0.00</td>
            </tr>`).join("");

        const sheets = ["自选股", "通信设备", "湖北板块", "非周期股", "社保重仓", "中证A500", "中证800", "中证央企", "5G概念", "云计算", "东数西算", "CPO概念", "6G概念"];
        document.getElementById("sheets").innerHTML =
            `<button class="w-[71px] bg-[#c00000] text-white [clip-path:polygon(0_0,100%_0,calc(100%-5px)_100%,8px_100%)]">关联品种</button>` +
            sheets.map(s => `<button class="-ml-px pl-[9px] pr-[5px] bg-[#a0a0a0] text-black [clip-path:polygon(0_0,calc(100%-6px)_0,100%_50%,calc(100%-3px)_100%,8px_100%)]">${s}</button>`).join("");

        // label, value, colour, label, value, colour, rule above
        const R = "text-[#ff3232]", Y = "text-[#c8c800]", G = "text-[#00ff00]", W = "text-[#c0c0c0]";
        const quote = [
            ["委比", "19.87%", R, "委差", "304", R],
            ["卖五", "65.49", R, "", "28", Y, 1], ["卖四", "65.48", R, "", "77", Y], ["卖三", "65.47", R, "", "87", Y], ["卖二", "65.46", R, "", "21", Y], ["卖一", "65.45", R, "", "400", Y],
            ["买一", "65.44", R, "", "38", Y, 1], ["买二", "65.43", R, "", "378", Y], ["买三", "65.42", R, "", "167", Y], ["买四", "65.41", R, "", "121", Y], ["买五", "65.40", R, "", "213", Y],
            ["现价", "65.44", R, "今开", "62.80", R, 1], ["涨跌", "2.73", R, "最高", "66.31", R], ["涨幅", "4.35%", R, "最低", "62.59", G], ["总量", "436889", Y, "量比", "1.74", R], ["外盘", "243176", R, "内盘", "193713", G],
            ["换手", "5.61%", W, "股本", "8.07亿", W, 1], ["净资", "12.12", W, "流通", "7.79亿", W], ["收益㈢", "0.920", W, "<b class='text-sm'>PE</b>(动)", "55.1", W],
        ];
        document.getElementById("quote").innerHTML = quote.map(q => `
            <tr class="${q[6] ? "h-5 border-t border-[#c00000]" : "h-[19px]"} *:p-0">
                <td><div class="pl-[2px]">${q[0]}</div></td>
                <td class="text-right text-sm leading-[19px] font-bold ${q[2]}">${q[1]}</td>
                <td><div class="pl-1">${q[3]}</div></td>
                <td class="text-right text-sm leading-[19px] font-bold ${q[5]}">${q[4].replace("亿", "<span class='text-base leading-[19px] font-normal'>亿</span>")}</td>
            </tr>`).join("");

        const ticks = `14:56 65.43 59 S 22
14:56 65.41 173 S 59
14:56 65.42 323 B 71
14:56 65.42 54 - 15
14:56 65.42 96 B 33
14:56 65.42 62 B 17
14:56 65.43 144 B 39
14:56 65.42 89 S 17
14:56 65.43 113 B 24
14:56 65.43 231 B 48
14:56 65.44 85 B 16
14:57 65.44 150 B 33
15:00 65.44 5068 - 1034`.split("\n").map(l => l.split(" "));
        document.getElementById("ticks").innerHTML = ticks.map(t => `
            <tr class="h-[18px] *:p-0 leading-[18px] text-right">
                <td><div class="text-left pl-[2px]">${t[0]}</div></td>
                <td class="text-[#ff3232]">${t[1]}</td>
                <td class="${t[2] === "5068" ? "text-[#c000c0]" : "text-[#c8c800]"}">${t[2]}</td>
                <td><div class="text-center font-normal ${t[3] === "S" ? "text-[#00ff00]" : "text-[#ff3232]"}">${t[3] === "-" ? "" : t[3]}</div></td>
                <td><div class="flex justify-end text-[#808080]">${t[4]}</div></td>
            </tr>`).join("");
    </script>
</body>
</html>
